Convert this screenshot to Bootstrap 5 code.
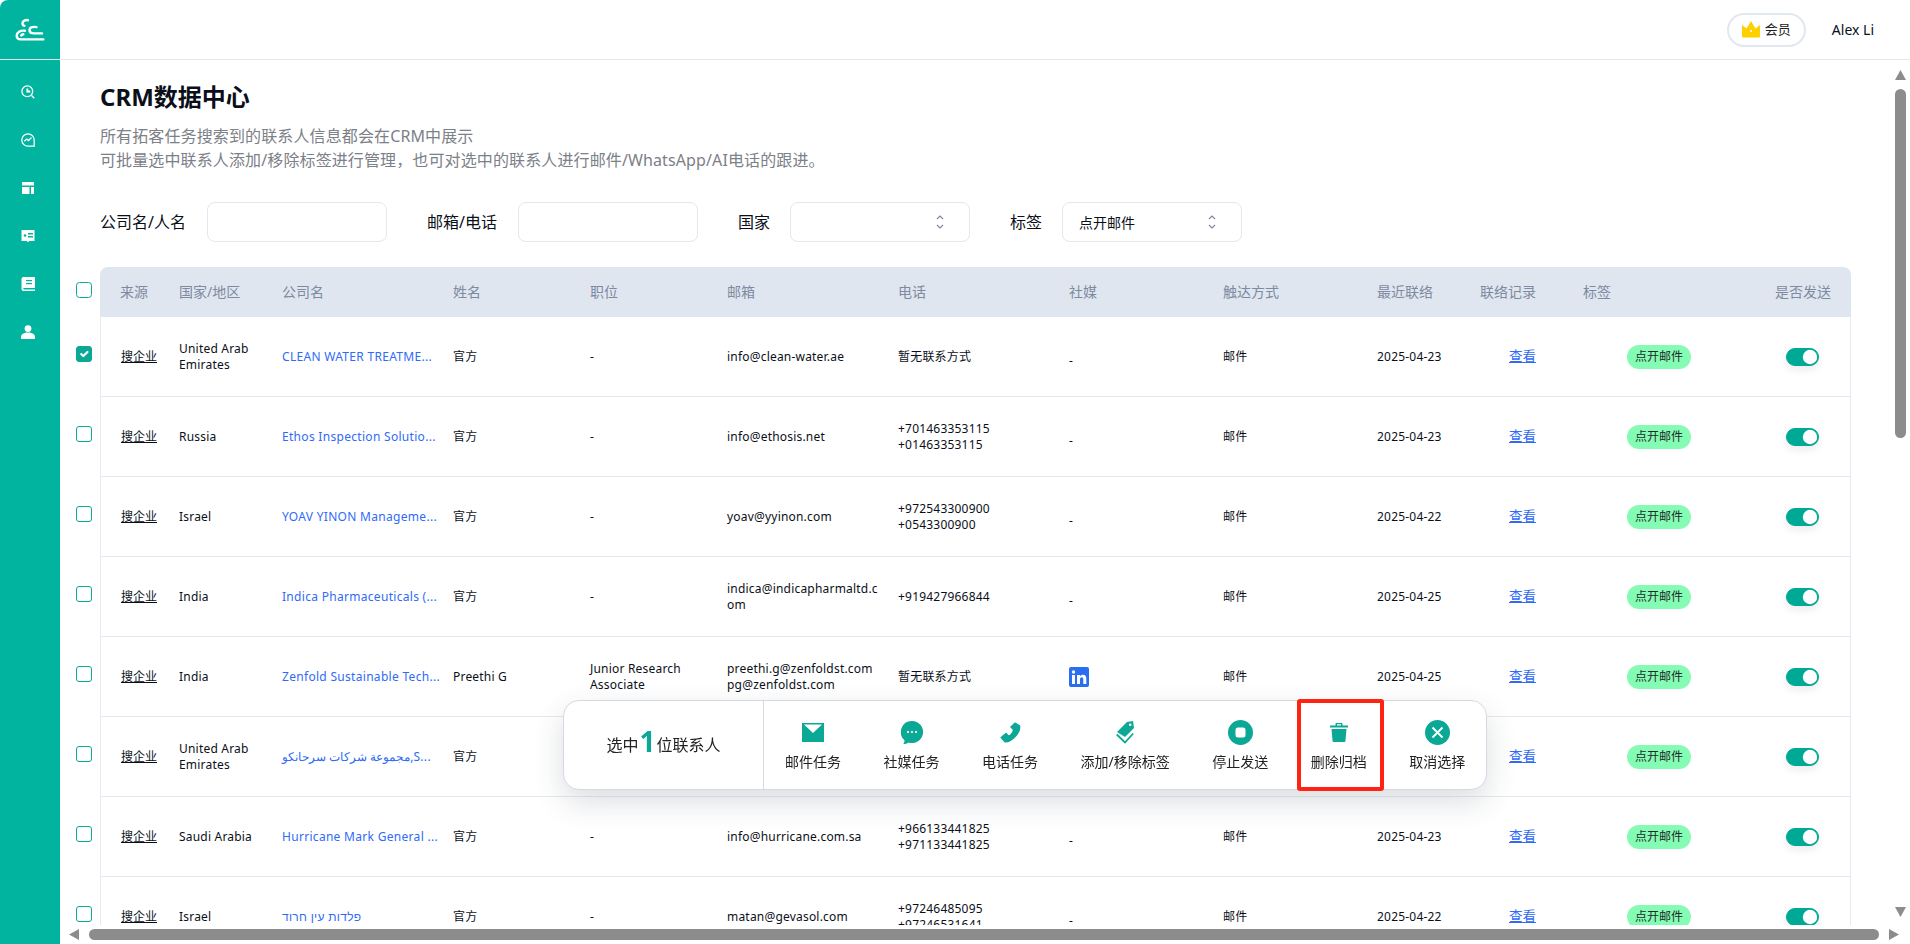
<!DOCTYPE html>
<html lang="zh-CN">
  <head>
    <meta charset="UTF-8" />
    <title>CRM数据中心</title>
    <link href="https://cdn.jsdelivr.net/npm/bootstrap@5.3.0/dist/css/bootstrap.min.css" rel="stylesheet" />
    <style>
      body { font-family: "Noto Sans", "Noto Sans CJK SC", sans-serif; font-size: 12px; color: #0b0f19; background: #fff; }
      .side-rail { width: 60px; flex: none; background: #00b4a0; border-top-left-radius: 8px; }
      .rail-logo { height: 60px; border-bottom: 1px solid #dff3f0; }
      .rail-icons { padding-top: 25px; padding-left: 21px; gap: 34px; }
      .rail-icons svg { display: block; width: 14px; height: 14px; }
      .top-head { height: 60px; flex: none; border-bottom: 1px solid #e5e7eb; padding-right: 36px; gap: 26px; }
      .vip-pill { width: 79px; height: 34px; border: 2px solid #e2e8f0; border-radius: 17px; gap: 5px; font-size: 13px; color: #222; }
      .user-name { font-size: 14px; }
      .page-pane { padding: 21px 42px 0 16px; }
      .page-title { margin: 0 0 11px 24px; font-size: 24px; line-height: 32px; font-weight: 700; }
      .page-desc { margin: 0 0 30px 24px; font-size: 16px; line-height: 24px; color: #7c8087; letter-spacing: 0.12px; }
      .filter-row { margin: 0 0 25px 24px; height: 40px; font-size: 16px; }
      .filter-row label { margin-right: 21px; }
      .filter-row label.label-tight { margin-right: 20px; }
      .filter-box { width: 180px; height: 40px; margin-right: 40px; border: 1px solid #e2e8f0; border-radius: 8px; font-size: 14px; padding: 0 16px; color: #0b0f19; }
      .filter-box.form-select { background-image: url("data:image/svg+xml,%3csvg xmlns='http://www.w3.org/2000/svg' viewBox='0 0 10 20'%3e%3cpath d='M2 7l3-3 3 3M2 13l3 3 3-3' fill='none' stroke='%237d8aa0' stroke-width='1.2'/%3e%3c/svg%3e"); background-size: 10px 20px; background-position: right 24px center; }
      .crm-table { table-layout: fixed; width: 1775px; border-collapse: separate; border-spacing: 0; margin: 0; }
      .crm-table th, .crm-table td { padding: 0 0 0 8px; vertical-align: middle; font-weight: 400; line-height: 16px; white-space: nowrap; }
      .crm-table th { height: 50px; font-size: 14px; color: #7d8aa0; background: #e0e6f0; border: 0; }
      .crm-table td { height: 80px; font-size: 12px; letter-spacing: 0.2px; color: #0b0f19; border-bottom: 1px solid #e5eaf2; border-top: 0; }
      .crm-table th:first-child, .crm-table td:first-child { background: transparent; padding: 0; border: 0; }
      .crm-table th:nth-child(2) { padding-left: 20px; border-top-left-radius: 8px; }
      .crm-table td:nth-child(2) { padding-left: 20px; border-left: 1px solid #e5eaf2; }
      .crm-table th:last-child { border-top-right-radius: 8px; }
      .crm-table td:last-child { border-right: 1px solid #e5eaf2; }
      .c-check { width: 24px; } .c-src { width: 71px; } .c-area { width: 103px; } .c-co { width: 171px; }
      .c-name, .c-job { width: 137px; } .c-mail, .c-tel { width: 171px; } .c-soc, .c-way { width: 154px; }
      .c-date, .c-log { width: 103px; } .c-tag { width: 192px; } .c-send { width: 84px; }
      .crm-check { width: 16px; height: 16px; margin: 0 0 4px; border: 1px solid #0ca896; border-radius: 4px; display: block; }
      .crm-table td .crm-check { margin-bottom: 6px; }
      .crm-check:checked { background-color: #0ca896; border-color: #0ca896; }
      .src-mark { text-decoration: underline; text-underline-offset: 1px; letter-spacing: 0; }
      .co-link, .log-link { color: #2f6bf5; text-decoration: none; }
      .co-link { letter-spacing: 0.3px; }
      .log-link { margin-left: 29px; font-size: 13.5px; letter-spacing: 0; text-decoration: underline; text-underline-offset: 1px; }
      .dash-low { position: relative; top: 4px; }
      .tag-pill { display: inline-block; width: 64px; height: 24px; line-height: 24px; margin-left: 44px; border-radius: 12px; background: #85fcb3; color: #1d2b2a; font-size: 12px; letter-spacing: 0; text-align: center; }
      .send-cell .form-check { min-height: 0; }
      .send-cell .form-check-input { width: 33px; height: 18px; margin: 0 0 0 11px; display: block; float: none; border: 1px solid #00a896; box-shadow: 0 4px 8px rgba(0, 0, 0, 0.08); }
      .send-cell .form-check-input:checked { background-color: #00a896; border-color: #00a896; background-image: url("data:image/svg+xml,%3csvg xmlns='http://www.w3.org/2000/svg' viewBox='-4 -4 8 8'%3e%3ccircle r='3.6' fill='%23fff'/%3e%3c/svg%3e"); }
      .v-track { width: 17px; flex: none; padding: 10px 0 8px 2px; }
      .h-track { height: 19px; flex: none; padding: 4px 11px 4px 9px; gap: 10px; }
      .v-thumb { width: 11px; height: 349px; margin-top: 9px; border-radius: 6px; background: #8c8c8c; }
      .h-thumb { height: 11px; border-radius: 6px; background: #8c8c8c; }
      .arrow-shape { display: block; flex: none; fill: #8c8c8c; }
      .bulk-bar { position: fixed; left: 563px; top: 700px; width: 924px; height: 90px; background: #fff; border: 1px solid #d5d9e2; border-radius: 16px; box-shadow: 0 12px 30px rgba(40, 50, 70, 0.16); }
      .bulk-count { width: 200px; height: 100%; flex: none; border-right: 1px solid #d5d9e2; font-size: 16px; color: #222; gap: 1px; }
      .bulk-count b { font-size: 28px; line-height: 28px; color: #0ca896; font-weight: 700; position: relative; top: -4px; }
      .bulk-list { padding-left: 21px; gap: 42.5px; height: 100%; }
      .bulk-item { font-size: 14px; line-height: 20px; color: #222; white-space: nowrap; }
      .bulk-ico { height: 26px; margin-bottom: 7px; margin-top: 18px; }
      .bulk-ico svg { display: block; fill: #0ca896; }
      .red-box { position: absolute; left: 733px; top: -2px; width: 87px; height: 92px; border: 4px solid #ff2314; border-radius: 3px; pointer-events: none; }
    </style>
  </head>
  <body class="d-flex vh-100 overflow-hidden">
    <aside class="side-rail d-flex flex-column">
      <div class="rail-logo">
        <svg width="60" height="59" viewBox="0 0 60 59" fill="none" stroke="#fff" stroke-width="2.4" stroke-linecap="round">
          <path d="M28 20.200c-3-.6-5.500 1-5.500 3.300 0 1.200.7 2 1.900 2.300" />
          <path d="M25 30.700c-4.800-.6-8.300 1.700-8.300 4.900 0 2.400 1.600 3.800 4 3.800h22.600" />
          <path d="M21.200 35.400c.4-.8 1.100-1.200 2.100-1.200" />
          <path d="M42 33.400h-8c-2.800 0-4.500-1.200-4.500-3.300 0-2.300 2.300-3.800 7-3" />
        </svg>
      </div>
      <div class="rail-icons d-flex flex-column">
        <svg viewBox="0 0 14 14" fill="none" stroke="#fff" stroke-width="1.300"><circle cx="6.300" cy="6.300" r="5.400" /><path d="M10.500 10.500 13.300 13.300" /><path d="M6.300 3.500v3h3" stroke-width="1.800" /></svg>
        <svg viewBox="0 0 14 14" fill="none" stroke="#fff" stroke-width="1.300"><path d="M7 .8a6.200 6.200 0 1 0 0 12.400h6.200V7A6.200 6.200 0 0 0 7 .8z" /><path d="M3.300 8.300 5.800 6l1.700 1.500 3-3" /></svg>
        <svg viewBox="0 0 14 14" fill="#fff"><rect x="1" y="1" width="12" height="3.500" /><rect x="1" y="6" width="7.500" height="7" /><rect x="10" y="6" width="3" height="7" /></svg>
        <svg viewBox="0 0 14 14" fill="#fff"><path d="M.5 1h13v11H8l-1 1.500L6 12H.5z" /><circle cx="4" cy="6.500" r="1.300" fill="#00b4a0" /><rect x="7" y="4" width="5" height="1.500" fill="#00b4a0" /><rect x="7" y="7" width="5" height="1.500" fill="#00b4a0" /></svg>
        <svg viewBox="0 0 14 14" fill="#fff"><path d="M2.500 0H14v11H3.200c-.6 0-1 .3-1 .8s.4.8 1 .8H14V14H2.500C1.300 14 .5 13.200 .5 12V2C.5.900 1.300 0 2.500 0z" /><rect x="5" y="3" width="6" height="1.200" fill="#00b4a0" /><rect x="5" y="6" width="6" height="1.200" fill="#00b4a0" /></svg>
        <svg viewBox="0 0 14 14" fill="#fff"><circle cx="7" cy="3.600" r="3.400" /><path d="M0 12c0-3 3-4.500 7-4.500s7 1.500 7 4.500v2H0z" /></svg>
      </div>
    </aside>

    <div class="d-flex flex-column flex-grow-1 overflow-hidden">
      <header class="top-head d-flex justify-content-end align-items-center">
        <div class="vip-pill d-flex justify-content-center align-items-center">
          <svg width="18" height="17" viewBox="0 0 18 17" fill="#ffd000"><path d="M0 4l4.500 3.500L9 0l4.500 7.500L18 4v11c0 1-.5 1.500-1.500 1.500h-15C.5 16.500 0 16 0 15z" /><circle cx="9" cy="10" r="1" fill="#fff" /></svg>
          <span>会员</span>
        </div>
        <span class="user-name">Alex Li</span>
      </header>

      <div class="d-flex flex-grow-1 overflow-hidden">
        <main class="page-pane flex-grow-1 overflow-hidden">
          <h1 class="page-title">CRM数据中心</h1>
          <p class="page-desc">所有拓客任务搜索到的联系人信息都会在CRM中展示<br />可批量选中联系人添加/移除标签进行管理，也可对选中的联系人进行邮件/WhatsApp/AI电话的跟进。</p>
          <form class="filter-row d-flex align-items-center">
            <label>公司名/人名</label>
            <input type="text" class="form-control filter-box" />
            <label>邮箱/电话</label>
            <input type="text" class="form-control filter-box" />
            <label class="label-tight">国家</label>
            <select class="form-select filter-box"><option></option></select>
            <label class="label-tight">标签</label>
            <select class="form-select filter-box"><option>点开邮件</option></select>
          </form>

          <table class="table crm-table">
            <colgroup>
              <col class="c-check" /><col class="c-src" /><col class="c-area" /><col class="c-co" /><col class="c-name" /><col class="c-job" /><col class="c-mail" /><col class="c-tel" /><col class="c-soc" /><col class="c-way" /><col class="c-date" /><col class="c-log" /><col class="c-tag" /><col class="c-send" />
            </colgroup>
            <thead>
              <tr>
                <th><input type="checkbox" class="form-check-input crm-check" /></th>
                <th>来源</th><th>国家/地区</th><th>公司名</th><th>姓名</th><th>职位</th><th>邮箱</th><th>电话</th><th>社媒</th><th>触达方式</th><th>最近联络</th><th>联络记录</th><th>标签</th><th>是否发送</th>
              </tr>
            </thead>
            <tbody id="crmRows"></tbody>
          </table>
        </main>

        <div class="v-track d-flex flex-column">
          <svg class="arrow-shape" width="11" height="10" viewBox="0 0 11 10"><path d="M5.500 0 11 10H0z" /></svg>
          <div class="v-thumb"></div>
          <svg class="arrow-shape mt-auto" width="11" height="10" viewBox="0 0 11 10"><path d="M0 0h11L5.500 10z" /></svg>
        </div>
      </div>

      <div class="h-track d-flex align-items-center">
        <svg class="arrow-shape" width="10" height="11" viewBox="0 0 10 11"><path d="M10 0v11L0 5.500z" /></svg>
        <div class="h-thumb flex-grow-1"></div>
        <svg class="arrow-shape" width="10" height="11" viewBox="0 0 10 11"><path d="M0 0l10 5.500L0 11z" /></svg>
      </div>
    </div>

    <div class="bulk-bar d-flex align-items-center">
      <div class="bulk-count d-flex justify-content-center align-items-center">
        <span>选中</span><b>1</b><span>位联系人</span>
      </div>
      <div class="bulk-list d-flex">
        <div class="bulk-item d-flex flex-column align-items-center">
          <div class="bulk-ico d-flex align-items-center"><svg width="22" height="19" viewBox="0 0 22 19"><path d="M0 0h22v19H0z" /><path d="M2 1.500h18L11 10z" fill="#fff" /></svg></div>
          <span>邮件任务</span>
        </div>
        <div class="bulk-item d-flex flex-column align-items-center">
          <div class="bulk-ico d-flex align-items-center"><svg width="22" height="23" viewBox="0 0 22 23"><path d="M11 0a11 11 0 1 1-3.500 21.400C6 22.500 4 23 2.300 23c.8-1 1.300-2.300 1.200-3.800A11 11 0 0 1 11 0z" /><circle cx="7" cy="11" r="1.100" fill="#fff" /><circle cx="11" cy="11" r="1.100" fill="#fff" /><circle cx="15" cy="11" r="1.100" fill="#fff" /></svg></div>
          <span>社媒任务</span>
        </div>
        <div class="bulk-item d-flex flex-column align-items-center">
          <div class="bulk-ico d-flex align-items-center"><svg width="21" height="21" viewBox="0 0 21 21"><path d="M15 1.200 19.500 4c1 6.500-8 16.500-14.500 15.800L1.200 15.500 6 11.500l2.500 2.700c2.500-.8 5-3.700 5-6.700L11 5z" stroke="#0ca896" stroke-width="1.500" stroke-linejoin="round" /></svg></div>
          <span>电话任务</span>
        </div>
        <div class="bulk-item d-flex flex-column align-items-center">
          <div class="bulk-ico d-flex align-items-center"><svg width="18" height="23" viewBox="0 0 18 23"><path d="M1 11 11 1l6-1 1 7-9 9z" /><circle cx="14.200" cy="3.800" r="1.300" fill="#fff" /><path d="M.8 13.500 9 21.500l8.200-9" fill="none" stroke="#0ca896" stroke-width="1.800" /></svg></div>
          <span>添加/移除标签</span>
        </div>
        <div class="bulk-item d-flex flex-column align-items-center">
          <div class="bulk-ico d-flex align-items-center"><svg width="25" height="25" viewBox="0 0 25 25"><circle cx="12.500" cy="12.500" r="12.500" /><rect x="7.500" y="7.500" width="10" height="10" rx="2.500" fill="#fff" /></svg></div>
          <span>停止发送</span>
        </div>
        <div class="bulk-item d-flex flex-column align-items-center">
          <div class="bulk-ico d-flex align-items-center"><svg width="18" height="19" viewBox="0 0 18 19"><path d="M5.500 2.500V1c0-.6.400-1 1-1h5c.6 0 1 .4 1 1v1.500H18v2H0v-2zM7 1.300v1.200h4V1.300z" /><path d="M1.500 6h15l-1 11.500c-.1 1-.7 1.500-1.500 1.500H4c-.8 0-1.400-.5-1.500-1.500z" /></svg></div>
          <span>删除归档</span>
        </div>
        <div class="bulk-item d-flex flex-column align-items-center">
          <div class="bulk-ico d-flex align-items-center"><svg width="25" height="25" viewBox="0 0 25 25"><circle cx="12.500" cy="12.500" r="12.500" /><path d="M7.500 7.500l10 10M17.500 7.500l-10 10" stroke="#fff" stroke-width="1.800" /></svg></div>
          <span>取消选择</span>
        </div>
      </div>
      <div class="red-box"></div>
    </div>

    <script src="https://cdn.jsdelivr.net/npm/bootstrap@5.3.0/dist/js/bootstrap.bundle.min.js"></script>
    <script>
      const linkedin = `<svg width="20" height="20" viewBox="0 0 20 20" class="d-block"><rect width="20" height="20" rx="2" fill="#2a6fef" /><rect x="3" y="8" width="3" height="9" fill="#fff" /><circle cx="4.500" cy="5" r="1.700" fill="#fff" /><path d="M8 17V8h3v1.300C11.700 8.300 12.800 7.800 14 7.800c2.300 0 3.300 1.500 3.300 4V17h-3v-4.700c0-1.300-.5-2-1.500-2s-1.800.8-1.800 2V17z" fill="#fff" /></svg>`;
      const dash = '<span class="dash-low">-</span>';
      const rows = [
        { area: "United Arab<br>Emirates", co: "CLEAN WATER TREATME...", name: "官方", job: "-", mail: "info@clean-water.ae", tel: "暂无联系方式", soc: dash, way: "邮件", date: "2025-04-23", on: true },
        { area: "Russia", co: "Ethos Inspection Solutio...", name: "官方", job: "-", mail: "info@ethosis.net", tel: "+701463353115<br>+01463353115", soc: dash, way: "邮件", date: "2025-04-23" },
        { area: "Israel", co: "YOAV YINON Manageme...", name: "官方", job: "-", mail: "yoav@yyinon.com", tel: "+972543300900<br>+0543300900", soc: dash, way: "邮件", date: "2025-04-22" },
        { area: "India", co: "Indica Pharmaceuticals (...", name: "官方", job: "-", mail: "indica@indicapharmaltd.c<br>om", tel: "+919427966844", soc: dash, way: "邮件", date: "2025-04-25" },
        { area: "India", co: "Zenfold Sustainable Tech...", name: "Preethi G", job: "Junior Research<br>Associate", mail: "preethi.g@zenfoldst.com<br>pg@zenfoldst.com", tel: "暂无联系方式", soc: linkedin, way: "邮件", date: "2025-04-25" },
        // the rest of this row sits behind the bulk action bar
        { area: "United Arab<br>Emirates", co: "مجموعة شركات سرحانكو,S...", name: "官方", job: "", mail: "", tel: "", soc: "", way: "", date: "" },
        { area: "Saudi Arabia", co: "Hurricane Mark General ...", name: "官方", job: "-", mail: "info@hurricane.com.sa", tel: "+966133441825<br>+971133441825", soc: dash, way: "邮件", date: "2025-04-23" },
        { area: "Israel", co: "פלדות עין חרוד", name: "官方", job: "-", mail: "matan@gevasol.com", tel: "+97246485095<br>+97246531641", soc: dash, way: "邮件", date: "2025-04-22" },
      ];

      document.getElementById("crmRows").innerHTML = rows
        .map(
          (r) => `<tr>
            <td><input type="checkbox" class="form-check-input crm-check" ${r.on ? "checked" : ""} /></td>
            <td><span class="src-mark">搜企业</span></td>
            <td>${r.area}</td>
            <td><a class="co-link" href="#">${r.co}</a></td>
            <td>${r.name}</td>
            <td>${r.job}</td>
            <td>${r.mail}</td>
            <td>${r.tel}</td>
            <td>${r.soc}</td>
            <td>${r.way}</td>
            <td>${r.date}</td>
            <td><a class="log-link" href="#">查看</a></td>
            <td><span class="tag-pill">点开邮件</span></td>
            <td class="send-cell"><div class="form-check form-switch p-0 m-0"><input class="form-check-input" type="checkbox" checked /></div></td>
          </tr>`
        )
        .join("");
    </script>
  </body>
</html>
